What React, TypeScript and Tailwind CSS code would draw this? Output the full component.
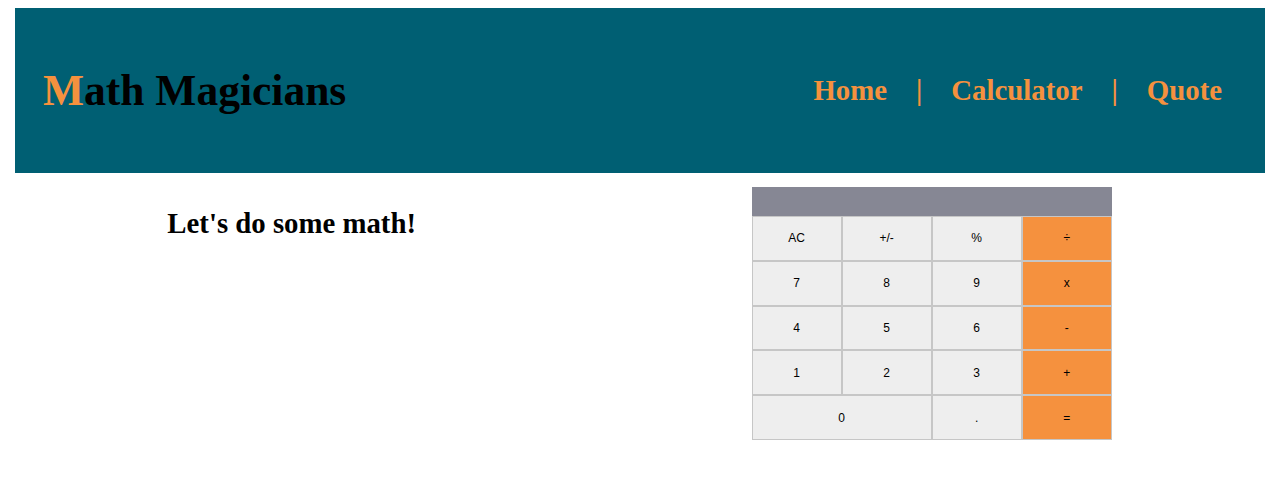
const keys = [
  { label: 'AC' },
  { label: '+/-' },
  { label: '%' },
  { label: '÷', op: true },
  { label: '7' },
  { label: '8' },
  { label: '9' },
  { label: 'x', op: true },
  { label: '4' },
  { label: '5' },
  { label: '6' },
  { label: '-', op: true },
  { label: '1' },
  { label: '2' },
  { label: '3' },
  { label: '+', op: true },
  { label: '0', wide: true },
  { label: '.' },
  { label: '=', op: true },
];

function Calculator() {
  return (
    <div className="w-[360px] mt-[14px] ml-[1px]">
      <div className="h-[29px] bg-[#868794]" />
      <div className="grid grid-cols-4">
        {keys.map((k) => (
          <button
            key={k.label}
            className={`h-[44.8px] border border-[#c6c6c6] text-[12px] text-black font-['Liberation_Sans',Arial,sans-serif] ${
              k.op ? 'bg-[#f5913e]' : 'bg-[#eeeeee]'
            } ${k.wide ? 'col-span-2' : ''}`}
          >
            {k.label}
          </button>
        ))}
      </div>
    </div>
  );
}

export default function App() {
  return (
    <div className="min-h-screen bg-white font-['Liberation_Serif','Times_New_Roman',serif] pt-[8px]">
      {/* Header */}
      <header className="ml-[15px] w-[1250px] h-[165px] bg-[#005f73] flex items-center justify-between pl-[28px] pr-[43px]">
        <h1 className="text-[43.5px] font-bold text-black leading-none">
          <span className="text-[#f5913e]">M</span>ath Magicians
        </h1>
        <nav className="flex items-center gap-[29px] text-[28.8px] font-bold text-[#f5913e] leading-none">
          <a href="#">Home</a>
          <span>|</span>
          <a href="#">Calculator</a>
          <span>|</span>
          <a href="#">Quote</a>
        </nav>
      </header>

      {/* Content */}
      <main className="flex justify-around items-start">
        <h2 className="text-[28.8px] font-bold text-black mt-[33px] leading-tight">Let's do some math!</h2>
        <Calculator />
      </main>
    </div>
  );
}
